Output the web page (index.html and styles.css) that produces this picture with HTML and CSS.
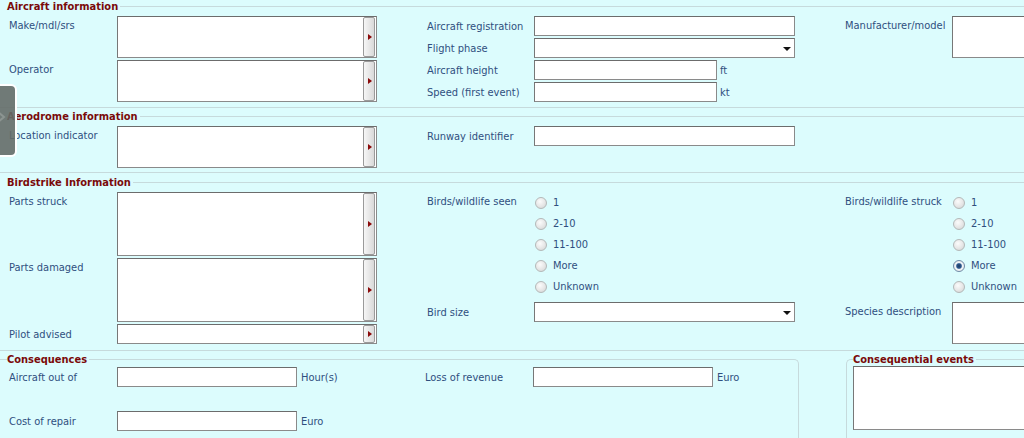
FILE: index.html
```html
<!DOCTYPE html>
<html>
<head>
<meta charset="utf-8">
<title>Birdstrike report</title>
<link rel="stylesheet" href="styles.css">
</head>
<body>
<div class="page">

  <section class="sec sec-first">
    <div class="sec-head"><span class="sec-title">Aircraft information</span></div>
    <div class="sec-body">
      <div class="col">
        <div class="row row-tall"><span class="lbl">Make/mdl/srs</span><div class="box picker h42"><div class="box-area"></div><span class="pick-btn"><i class="tri-r"></i></span></div></div>
        <div class="row row-tall"><span class="lbl">Operator</span><div class="box picker h42"><div class="box-area"></div><span class="pick-btn"><i class="tri-r"></i></span></div></div>
      </div>
      <div class="col">
        <div class="row"><span class="lbl">Aircraft registration</span><div class="box inp w261"></div></div>
        <div class="row"><span class="lbl">Flight phase</span><div class="box inp sel w261"><i class="tri-d"></i></div></div>
        <div class="row"><span class="lbl">Aircraft height</span><div class="box inp w183"></div><span class="unit">ft</span></div>
        <div class="row"><span class="lbl">Speed (first event)</span><div class="box inp w183"></div><span class="unit">kt</span></div>
      </div>
      <div class="col">
        <div class="row row-tall"><span class="lbl">Manufacturer/model</span><div class="box h42 w261"></div></div>
      </div>
    </div>
  </section>

  <section class="sec sec-aero">
    <div class="sec-head"><span class="sec-title">Aerodrome information</span></div>
    <div class="sec-body">
      <div class="col">
        <div class="row row-tall"><span class="lbl">Location indicator</span><div class="box picker h42"><div class="box-area"></div><span class="pick-btn"><i class="tri-r"></i></span></div></div>
      </div>
      <div class="col">
        <div class="row"><span class="lbl">Runway identifier</span><div class="box inp w261"></div></div>
      </div>
      <div class="col"></div>
    </div>
  </section>

  <section class="sec sec-bird">
    <div class="sec-head"><span class="sec-title">Birdstrike Information</span></div>
    <div class="sec-body">
      <div class="col">
        <div class="row row-tall"><span class="lbl">Parts struck</span><div class="box picker h64"><div class="box-area"></div><span class="pick-btn"><i class="tri-r"></i></span></div></div>
        <div class="row row-tall"><span class="lbl">Parts damaged</span><div class="box picker h64"><div class="box-area"></div><span class="pick-btn"><i class="tri-r"></i></span></div></div>
        <div class="row"><span class="lbl">Pilot advised</span><div class="box picker h20"><div class="box-area"></div><span class="pick-btn"><i class="tri-r"></i></span></div></div>
      </div>
      <div class="col">
        <div class="radio-block">
          <span class="lbl">Birds/wildlife seen</span>
          <div class="radios">
            <label class="radio"><span class="rb"></span>1</label>
            <label class="radio"><span class="rb"></span>2-10</label>
            <label class="radio"><span class="rb"></span>11-100</label>
            <label class="radio"><span class="rb"></span>More</label>
            <label class="radio"><span class="rb"></span>Unknown</label>
          </div>
        </div>
        <div class="row row-after-radio"><span class="lbl">Bird size</span><div class="box inp sel w261"><i class="tri-d"></i></div></div>
      </div>
      <div class="col">
        <div class="radio-block">
          <span class="lbl">Birds/wildlife struck</span>
          <div class="radios">
            <label class="radio"><span class="rb"></span>1</label>
            <label class="radio"><span class="rb"></span>2-10</label>
            <label class="radio"><span class="rb"></span>11-100</label>
            <label class="radio"><span class="rb checked"></span>More</label>
            <label class="radio"><span class="rb"></span>Unknown</label>
          </div>
        </div>
        <div class="row row-tall row-after-radio"><span class="lbl">Species description</span><div class="box h42 w261"></div></div>
      </div>
    </div>
  </section>

  <div class="cons-wrap">
    <div class="cons">
      <span class="box-title">Consequences</span>
      <div class="cons-body">
        <div class="cons-col">
          <div class="row"><span class="lbl">Aircraft out of</span><div class="box inp w180"></div><span class="unit">Hour(s)</span></div>
          <div class="row"><span class="lbl">Cost of repair</span><div class="box inp w180"></div><span class="unit">Euro</span></div>
        </div>
        <div class="cons-col">
          <div class="row"><span class="lbl">Loss of revenue</span><div class="box inp w180"></div><span class="unit">Euro</span></div>
        </div>
      </div>
    </div>
    <div class="events">
      <span class="box-title">Consequential events</span>
      <div class="box h64 events-area"></div>
    </div>
  </div>

</div>

<div class="side-tab">
  <svg width="10" height="14" viewBox="0 0 10 14"><path d="M1 2 L7 7 L1 12" fill="none" stroke="#8c9491" stroke-width="2"/></svg>
</div>
</body>
</html>
```

FILE: styles.css
```css
html, body {
  margin: 0;
  padding: 0;
  overflow: hidden;
}
body {
  width: 1024px;
  height: 438px;
  background: #dcfcfd;
  font-family: "DejaVu Sans Condensed", "DejaVu Sans", sans-serif;
  font-size: 11px;
  line-height: 13px;
  color: #2f4f7f;
  position: relative;
}
.page {
  width: 1200px;
}

/* sections */
.sec {
  border-bottom: 1px solid #c6dadc;
  padding-bottom: 5px;
}
.sec-aero { margin-top: 2px; padding-bottom: 4px; }
.sec-bird { margin-top: 3px; padding-bottom: 6px; }
.sec-head {
  display: flex;
  align-items: center;
  height: 12px;
}
.sec-title {
  font-weight: bold;
  color: #7a0a0a;
  padding-left: 7px;
  padding-right: 2px;
  white-space: nowrap;
}
.sec-head::after {
  content: "";
  flex: 1;
  border-top: 1px solid #c6dadc;
}
.sec-body {
  display: grid;
  grid-template-columns: 418px 418px 340px;
  padding-left: 9px;
  margin-top: 4px;
}
.col {
  display: flex;
  flex-direction: column;
  gap: 2px;
}

/* rows */
.row {
  display: flex;
  align-items: center;
  min-height: 20px;
}
.row-tall {
  align-items: flex-start;
}
.row-tall .lbl {
  padding-top: 3px;
}
.lbl {
  width: 107px;
  flex: none;
  white-space: nowrap;
}
.col:first-child .lbl { width: 108px; }
.unit {
  margin-left: 3px;
}

/* fields */
.box {
  box-sizing: border-box;
  background: #fff;
  border: 1px solid #8a8a8a;
  border-top-color: #6c6c6c;
  border-left-color: #777;
  width: 260px;
  height: 20px;
  flex: none;
}
.h42 { height: 42px; }
.h64 { height: 64px; }
.h20 { height: 20px; }
.w261 { width: 261px; }
.w183 { width: 183px; }
.w180 { width: 180px; }

.picker {
  display: flex;
  padding: 0 1px 0 0;
}
.box-area { flex: 1; }
.pick-btn {
  width: 12px;
  box-sizing: border-box;
  border: 1px solid #9a9a9a;
  border-radius: 2px;
  background: linear-gradient(to right, #f6f6f6, #d9d9d9);
  display: flex;
  align-items: center;
  justify-content: center;
}
.tri-r {
  width: 0;
  height: 0;
  border-top: 3px solid transparent;
  border-bottom: 3px solid transparent;
  border-left: 4px solid #8a0a0a;
  margin-left: 1px;
}
.sel {
  display: flex;
  align-items: center;
  justify-content: flex-end;
  padding-right: 3px;
}
.tri-d {
  width: 0;
  height: 0;
  border-left: 4px solid transparent;
  border-right: 4px solid transparent;
  border-top: 4px solid #111;
  margin-top: 1px;
}

/* radios */
.radio-block {
  display: flex;
  align-items: flex-start;
}
.radio-block .lbl {
  padding-top: 3px;
}
.radios {
  display: flex;
  flex-direction: column;
}
.radio {
  display: flex;
  align-items: center;
  height: 21px;
  gap: 6px;
  padding-left: 1px;
}
.rb {
  width: 12px;
  height: 12px;
  box-sizing: border-box;
  border-radius: 50%;
  border: 1px solid #b4b8b8;
  background: radial-gradient(circle at 40% 35%, #fbfbfb 0%, #e6e6e6 55%, #cfd2d2 100%);
}
.rb.checked {
  border-color: #6f8aa6;
  background: radial-gradient(circle at 50% 50%, #1e3a63 0%, #2c5588 30%, #6a8cb4 38%, #f2f4f6 48%, #dde2e6 100%);
}
.row-after-radio {
  margin-top: 3px;
}

/* consequences */
.cons-wrap {
  display: flex;
  margin-top: 8px;
}
.cons {
  width: 799px;
  box-sizing: border-box;
  border-top: 1px solid #c6dadc;
  border-right: 1px solid #c6dadc;
  border-top-right-radius: 5px;
  height: 90px;
}
.box-title {
  display: block;
  width: max-content;
  font-weight: bold;
  color: #7a0a0a;
  background: #dcfcfd;
  margin-top: -7px;
  padding-right: 2px;
}
.cons > .box-title {
  margin-left: 7px;
}
.cons-body {
  display: grid;
  grid-template-columns: 416px 360px;
  padding-left: 9px;
  margin-top: 1px;
}
.cons-col {
  display: flex;
  flex-direction: column;
  gap: 24px;
}
.cons .lbl { width: 108px; }
.cons .unit { margin-left: 4px; }

.events {
  margin-left: 47px;
  width: 300px;
  border-top: 1px solid #c6dadc;
  border-left: 1px solid #c6dadc;
  border-top-left-radius: 5px;
  padding-left: 6px;
  height: 90px;
}
.events-area {
  width: 260px;
  margin-top: 0;
}

/* side tab overlay */
.side-tab {
  position: absolute;
  left: 0;
  top: 84px;
  width: 15px;
  height: 69px;
  background: rgba(100, 108, 104, 0.9);
  border: 2px solid #fff;
  border-left: none;
  border-radius: 0 6px 6px 0;
  display: flex;
  align-items: center;
  justify-content: flex-start;
  overflow: hidden;
}
.side-tab svg {
  margin-left: -3px;
  margin-top: -8px;
}
```
